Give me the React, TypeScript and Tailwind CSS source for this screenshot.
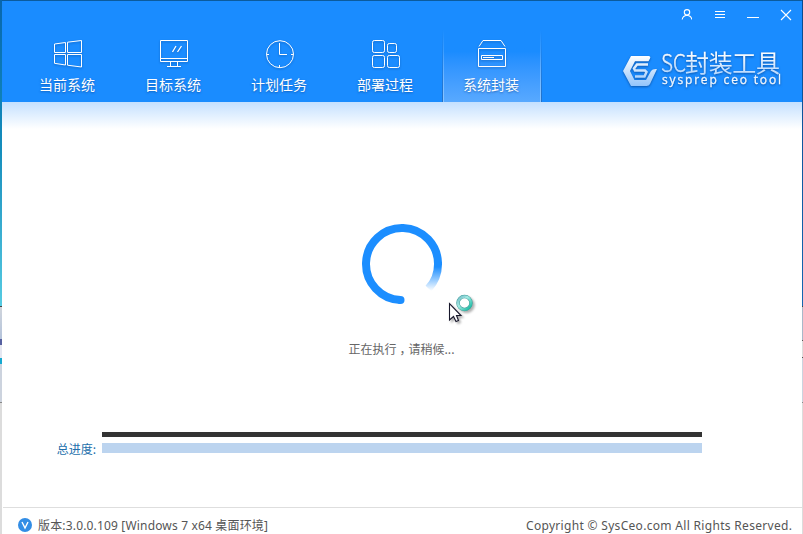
import type { ReactNode } from 'react';

const cjk = "font-['Noto_Sans_CJK_SC','Noto_Sans',sans-serif]";

function NavIcon({ children }: { children: ReactNode }) {
  return (
    <svg
      width="28"
      height="29"
      viewBox="0 0 28 29"
      fill="none"
      stroke="#fff"
      strokeWidth="1"
      className="overflow-visible drop-shadow-[0_1px_1px_rgba(0,50,120,0.45)]"
    >
      {children}
    </svg>
  );
}

const items = [
  {
    label: '当前系统',
    icon: (
      <NavIcon>
        <path d="M.5 4 11.5 2.5V12.5H.5ZM13.5 2.2 27.5.5V12.5H13.5ZM.5 14.5H11.5V25L.5 23.3ZM13.5 14.5H27.5V27L13.5 25.2Z" />
      </NavIcon>
    ),
  },
  {
    label: '目标系统',
    icon: (
      <NavIcon>
        <path d="M.5.5H27.5V21.5H.5ZM.5 18.5H27.5M10.5 21.5V26.5M17.5 21.5V26.5M7 26.5H21" />
        <path d="M12.5 12 16 6M17.5 12 21.5 6" strokeWidth="1.3" />
      </NavIcon>
    ),
  },
  {
    label: '计划任务',
    icon: (
      <NavIcon>
        <circle cx="14" cy="14.2" r="13.5" />
        <path d="M13.5 3V14.5H21M.5 14.5H3M25 14.5H27.5M13.5 25V27.5" />
      </NavIcon>
    ),
  },
  {
    label: '部署过程',
    icon: (
      <NavIcon>
        <rect x=".5" y=".5" width="12" height="12" rx="1.8" />
        <rect x="15.5" y="3.5" width="9" height="9" rx="1.8" />
        <rect x=".5" y="15.5" width="12" height="12" rx="1.8" />
        <rect x="15.5" y="15.5" width="12" height="12" rx="1.8" />
      </NavIcon>
    ),
  },
  {
    label: '系统封装',
    active: true,
    icon: (
      <NavIcon>
        <path d="M1 6.5 5 .5H23L27 6.5M.5 8.5H27.5V26.5H.5ZM3.5 15.5H24.5V19.5H3.5ZM5 17.5H16" />
      </NavIcon>
    ),
  },
];

function WindowButtons() {
  return (
    <div className="flex h-[29px] items-start justify-end gap-[22px] pt-2 pr-[10px]">
      <svg width="12" height="12" viewBox="-1 0 12 12" fill="none" stroke="#fff" strokeWidth="1.1">
        <circle cx="6" cy="3.3" r="2.7" />
        <path d="M1.2 10.5C1.5 7.8 3 6.6 6 6.2C9 6.6 10.5 7.8 10.8 10.5" />
      </svg>
      <svg width="10" height="12" viewBox="-1 0 10 12" stroke="#fff" className="overflow-visible">
        <path d="M0 2.5H10M0 5.5H10M0 8.5H10" />
      </svg>
      <svg width="12" height="12" viewBox="-1 0 12 12" stroke="#fff" className="overflow-visible">
        <path d="M0 8.5H12" />
      </svg>
      <svg width="12" height="12" viewBox="0 0 12 12" stroke="#fff" strokeWidth="1.1">
        <path d="M1 1 11 11M11 1 1 11" />
      </svg>
    </div>
  );
}

function Logo() {
  return (
    <svg
      width="160"
      height="40"
      viewBox="0 0 160 40"
      className="overflow-visible drop-shadow-[0_1px_1px_rgba(0,50,120,0.6)]"
    >
      <defs>
        <linearGradient id="badge" x1="0" y1="5" x2="0" y2="35" gradientUnits="userSpaceOnUse">
          <stop stopColor="#fff" />
          <stop offset="1" stopColor="#92c4fb" />
        </linearGradient>
        <linearGradient id="title" x1="0" y1="1" x2="0" y2="24" gradientUnits="userSpaceOnUse">
          <stop stopColor="#fff" />
          <stop offset="1" stopColor="#b5d8ff" />
        </linearGradient>
      </defs>
      <path
        d="M8 5H25.500Q28 5 27 7.500L25.500 10.300H12L7 20 11.500 29H23L28 20Q29.500 17.500 34 18L27 33Q26 35 23.500 35H8L0 20Z"
        fill="url(#badge)"
      />
      <path
        d="M25 13.500H14L11 17.500 12 19.500H22L23.500 21 21.500 25.500H12"
        fill="none"
        stroke="url(#badge)"
        strokeWidth="2.500"
      />
      <text
        x="38"
        y="21"
        fontSize="24"
        textLength="25"
        lengthAdjust="spacingAndGlyphs"
        fill="url(#title)"
        stroke="url(#title)"
        strokeWidth=".4"
        className="font-['Noto_Sans_CJK_SC',sans-serif] font-light"
      >
        SC
      </text>
      <text
        x="62"
        y="20.500"
        fontSize="24"
        textLength="95"
        fill="url(#title)"
        className="font-['Noto_Sans_CJK_SC',sans-serif]"
      >
        封装工具
      </text>
      <text
        x="39"
        y="33"
        fontSize="12"
        textLength="119"
        fill="#f0f7ff"
        stroke="#f0f7ff"
        strokeWidth=".3"
        className="font-['Open_Sans',sans-serif]"
      >
        sysprep ceo tool
      </text>
    </svg>
  );
}

function Spinner() {
  return (
    <svg width="80" height="80" viewBox="0 0 80 80" fill="none">
      <defs>
        <linearGradient id="tail" x1="0" y1="43" x2="0" y2="67" gradientUnits="userSpaceOnUse">
          <stop stopColor="#1c8eff" />
          <stop offset="1" stopColor="#fff" />
        </linearGradient>
      </defs>
      <path d="M38.500 76A36 36 0 1 1 76 41" stroke="#1c8eff" strokeWidth="8" />
      <circle cx="38.500" cy="76" r="4" fill="#1c8eff" />
      <path d="M76 40A36 36 0 0 1 66.500 64.500" stroke="url(#tail)" strokeWidth="8" />
    </svg>
  );
}

function BusyCursor() {
  return (
    <svg width="32" height="32" viewBox="0 0 32 32" className="absolute top-[293px] left-[448px] overflow-visible">
      <defs>
        <linearGradient id="ring" x1="0" y1="0" x2="1" y2="1">
          <stop stopColor="#70b8c4" />
          <stop offset=".4" stopColor="#a5ece5" />
          <stop offset="1" stopColor="#08b49a" />
        </linearGradient>
      </defs>
      <g className="drop-shadow-[2px_2px_1px_rgba(0,0,0,0.3)]">
        <circle cx="16.500" cy="10" r="6.500" fill="#fff" stroke="#439e9b" strokeWidth="3.500" />
        <circle cx="16.500" cy="10" r="6.500" fill="none" stroke="url(#ring)" strokeWidth="2.500" />
        <path
          d="M1.500 10.500V27L5.500 23.500 8 28.500 10.500 27.500 8.500 22.500H13Z"
          fill="#fff"
          stroke="#17172b"
          strokeWidth="1.100"
        />
      </g>
    </svg>
  );
}

export default function App() {
  return (
    <div className="relative flex h-[534px] w-[803px] overflow-hidden bg-white">
      <div className="flex w-0.5 shrink-0 flex-col">
        <div className="h-[306px] bg-linear-to-b from-[#0866ad] via-[#168fbd] to-[#55cbe2]" />
        <div className="h-px bg-[#444]" />
        <div className="h-8 bg-linear-to-b from-[#d0d5dc] to-[#b4c3db]" />
        <div className="h-1.5 bg-[#5660a0]" />
        <div className="h-[13px] bg-[#e5e7f1]" />
        <div className="h-1.5 bg-[#16a9d0]" />
        <div className="h-[38px] bg-[#ccd3de]" />
        <div className="h-px bg-[#888]" />
        <div className="grow bg-[#dcdcdc]" />
      </div>
      <div className="flex w-[800px] shrink-0 flex-col">
        <div className="h-px shrink-0 bg-[#0b5b9d]" />
        <header className="flex h-[101px] shrink-0 flex-col bg-[#1a8cff]">
          <WindowButtons />
          <div className="flex h-[72px] justify-between pr-[19px] pl-[17px]">
            <nav className="flex gap-2">
              {items.map((item) => (
                <div
                  key={item.label}
                  className={
                    item.active
                      ? 'relative flex w-[98px] flex-col items-center bg-linear-to-b from-[#1a8cff] from-30% to-[#58a9ff] pt-2.5'
                      : 'flex w-[98px] flex-col items-center pt-2.5'
                  }
                >
                  {item.active && (
                    <>
                      <span className="absolute inset-y-0 left-0 w-px bg-linear-to-b from-transparent to-[#8ac5ff]" />
                      <span className="absolute inset-y-0 -left-px w-px bg-linear-to-b from-transparent to-[#2371c8]" />
                      <span className="absolute inset-y-0 right-0 w-px bg-linear-to-b from-transparent to-[#8ac5ff]" />
                      <span className="absolute inset-y-0 -right-px w-px bg-linear-to-b from-transparent to-[#2371c8]" />
                    </>
                  )}
                  {item.icon}
                  <span
                    className={`${cjk} mt-[5px] mr-0.5 text-[14px] leading-5 whitespace-nowrap text-white [text-shadow:0_1px_2px_rgba(0,50,120,0.5)]`}
                  >
                    {item.label}
                  </span>
                </div>
              ))}
            </nav>
            <div className="pt-[21px]">
              <Logo />
            </div>
          </div>
        </header>
        <main className="flex h-[405px] shrink-0 flex-col bg-linear-to-b from-[#c4e0ff] to-white to-[27px] pt-[122px]">
          <div className="flex flex-col items-center">
            <Spinner />
            <p className={`${cjk} mt-[35px] mr-px text-[12px] leading-5 text-[#666]`}>
              正在执行<span className="relative left-[3px]">，</span>请稍候...
            </p>
          </div>
          <div className="mt-[73px] flex">
            <span className={`${cjk} w-[100px] pt-[7px] pr-1.5 text-right text-[12px] leading-5 text-[#236fac]`}>
              总进度:
            </span>
            <div className="flex w-[600px] flex-col gap-1.5">
              <div className="h-[5px] bg-[#333]" />
              <div className="h-2.5 bg-[#bcd4ef]" />
            </div>
          </div>
        </main>
        <footer className="ml-px flex h-[27px] shrink-0 items-start justify-between border-t border-[#dedede] bg-white pt-[9px] pr-[10px] pl-[15px] text-[12px] leading-[18px] text-[#555]">
          <div className="flex items-center">
            <svg width="14" height="14" viewBox="0 0 14 14" className="-mt-0.5">
              <circle cx="7" cy="7" r="7" fill="#328de5" />
              <path d="M4 4 7 10 10 4" fill="none" stroke="#fff" strokeWidth="1.400" />
            </svg>
            <svg width="232" height="18" className="ml-1.5 overflow-visible">
              <text
                x="0"
                y="13"
                fontSize="12"
                textLength="230"
                fill="#555"
                className="font-['Noto_Sans','Noto_Sans_CJK_SC',sans-serif]"
              >
                版本:3.0.0.109 [Windows 7 x64 桌面环境]
              </text>
            </svg>
          </div>
          <svg width="266" height="18" className="overflow-visible">
            <text
              x="0"
              y="13"
              fontSize="12"
              textLength="266"
              fill="#555"
              className="font-['Noto_Sans',sans-serif]"
            >
              Copyright © SysCeo.com All Rights Reserved.
            </text>
          </svg>
        </footer>
      </div>
      <div className="flex w-px shrink-0 flex-col">
        <div className="h-[306px] bg-linear-to-b from-[#0a4a8e] to-[#1567b2]" />
        <div className="h-px bg-[#444]" />
        <div className="h-[33px] bg-[#a9b8c9]" />
        <div className="h-[18px] border-y border-[#555] bg-[#ddd]" />
        <div className="h-11 bg-[#cbd4df]" />
        <div className="h-px bg-[#888]" />
        <div className="grow bg-[#dcdcdc]" />
      </div>
      <BusyCursor />
    </div>
  );
}
